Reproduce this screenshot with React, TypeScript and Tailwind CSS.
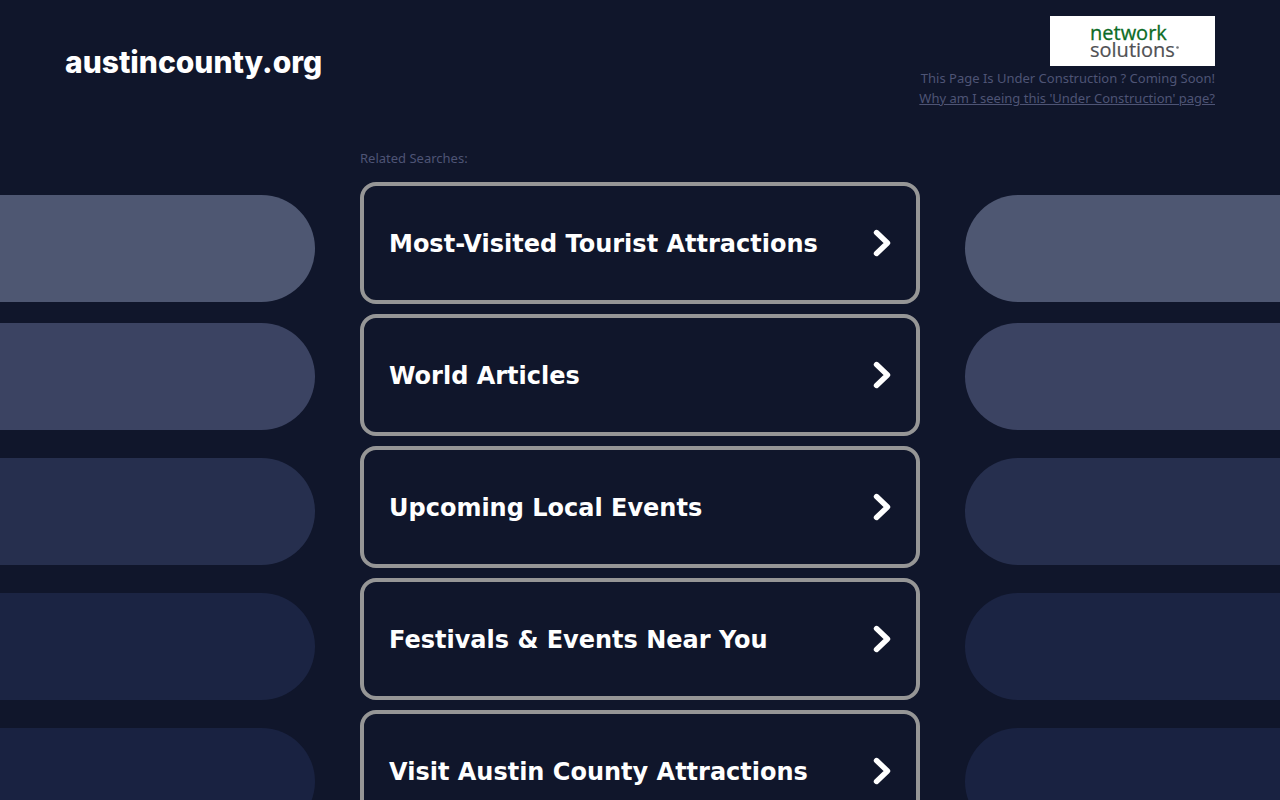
import React from 'react';

const searches = [
  'Most-Visited Tourist Attractions',
  'World Articles',
  'Upcoming Local Events',
  'Festivals & Events Near You',
  'Visit Austin County Attractions',
];

const pillColors = ['bg-[#4e5772]', 'bg-[#3b4362]', 'bg-[#262f4e]', 'bg-[#1b2443]', 'bg-[#192241]'];

const Logo: React.FC = () => (
  <div className="w-[165px] h-[50px] shrink-0 bg-white flex items-center justify-center">
    <svg width="92" height="42" viewBox="0 0 92 42" role="img" aria-label="network solutions">
      <g fontFamily="'Open Sans', 'Noto Sans', sans-serif" fontSize="20">
        <text x="3" y="20" fill="#0b6b25" stroke="#0b6b25" strokeWidth="0.3">network</text>
        <text x="3" y="37" fill="#505154" stroke="#505154" strokeWidth="0.2">solutions</text>
      </g>
      <circle cx="90.5" cy="27.5" r="1.3" fill="#77787b" />
    </svg>
  </div>
);

const Chevron: React.FC = () => (
  <svg width="18" height="28" viewBox="0 0 18 28" fill="none" aria-hidden="true">
    <path d="M3.5 3.5 L14.5 14 L3.5 24.5" stroke="#fff" strokeWidth="5.4" strokeLinecap="round" strokeLinejoin="round" />
  </svg>
);

const Pills: React.FC<{ side: 'left' | 'right' }> = ({ side }) => (
  <div className="flex-1 pt-[45px] flex flex-col gap-7" aria-hidden="true">
    {pillColors.map((color, i) => (
      <div
        key={i}
        className={`h-[107px] ${color} ${side === 'left' ? 'rounded-r-full' : 'rounded-l-full'} ${i === 0 ? '-mb-[7px]' : ''}`}
      />
    ))}
  </div>
);

const App: React.FC = () => {
  return (
    <div className="min-h-screen bg-[#10162b] font-['Noto_Sans',sans-serif] text-[#4e5475]">
      <header className="flex justify-between px-[65px] pt-4 pb-[42px]">
        <h1 className="pt-[25px] font-['Inter',sans-serif] text-[30px] leading-[42px] font-extrabold text-white">
          austincounty.org
        </h1>
        <div className="flex flex-col items-end text-[13px] leading-5">
          <Logo />
          <p className="pt-0.5">This Page Is Under Construction ? Coming Soon!</p>
          <a href="#why" className="underline">
            Why am I seeing this 'Under Construction' page?
          </a>
        </div>
      </header>

      <div className="flex gap-[45px]">
        <Pills side="left" />

        <main className="w-[560px]">
          <h2 className="text-[13px] leading-4 mb-4">Related Searches:</h2>
          <ul className="flex flex-col gap-2.5">
            {searches.map(item => (
              <li key={item}>
                <a
                  href="#search"
                  className="min-h-[122px] px-[25px] border-4 border-[#969696] rounded-2xl flex items-center justify-between font-['DejaVu_Sans',sans-serif] text-2xl font-bold text-white"
                >
                  <span className="pt-0.5">{item}</span>
                  <Chevron />
                </a>
              </li>
            ))}
          </ul>
        </main>

        <Pills side="right" />
      </div>
    </div>
  );
};

export default App;
